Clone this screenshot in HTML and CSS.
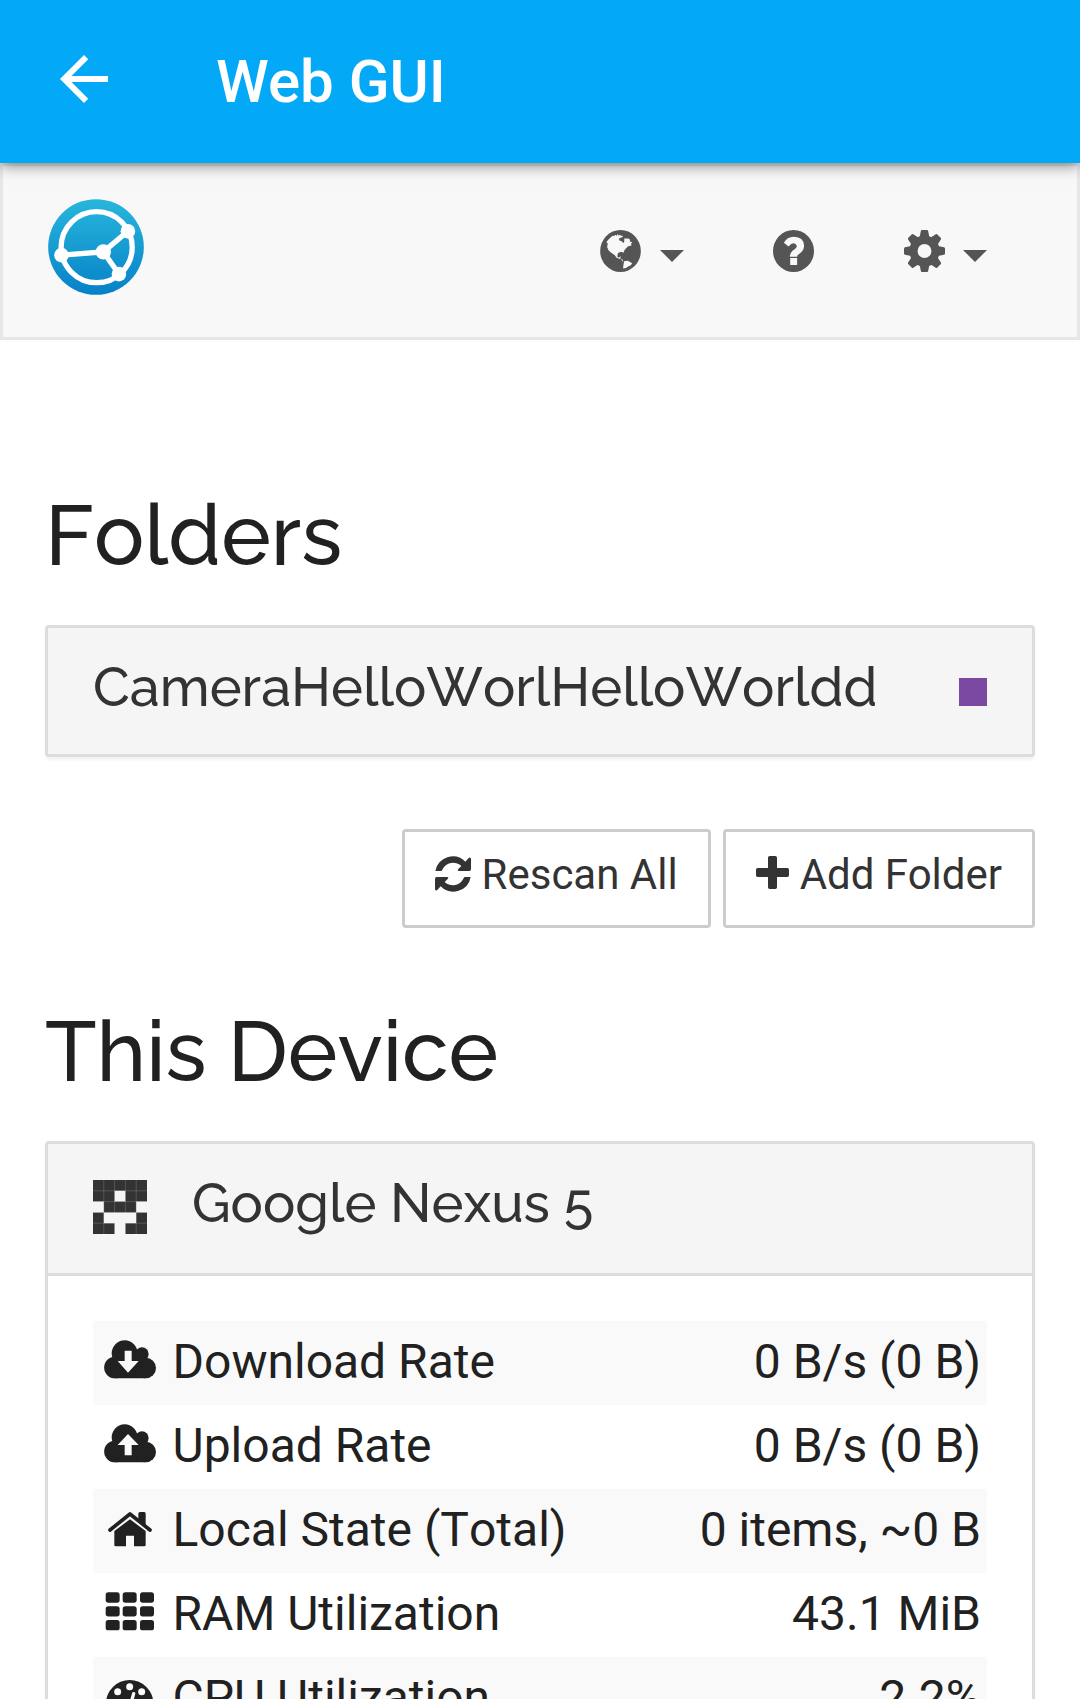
FILE: index.html
```html
<!DOCTYPE html>
<html lang="en">
<head>
<meta charset="utf-8">
<title>Web GUI</title>
<link rel="stylesheet" href="styles.css">
</head>
<body>
<header class="appbar">
  <svg class="back" viewBox="0 0 24 24"><path d="M20 11H7.83l5.59-5.59L12 4l-8 8 8 8 1.41-1.41L7.83 13H20z"/></svg>
  <span class="title">Web GUI</span>
</header>
<nav class="navbar">
  <svg class="logo" viewBox="24 26 288 289">
    <defs><linearGradient id="sky" x1="0" y1="0" x2="0" y2="1"><stop offset="0" stop-color="#27b7dc"/><stop offset="1" stop-color="#0781c8"/></linearGradient></defs>
    <circle cx="168" cy="170.5" r="144" fill="url(#sky)"/>
    <g fill="none" stroke="#fff" stroke-width="16"><circle cx="170" cy="171" r="107"/><path d="M64 195 190 185 264 123M190 185 237 252"/></g>
    <g fill="#fff"><circle cx="264" cy="123" r="22"/><circle cx="64" cy="195" r="22"/><circle cx="190" cy="185" r="23"/><circle cx="237" cy="252" r="22"/></g>
  </svg>
  <div class="menu">
    <a class="item language"><svg class="glyph" viewBox="173 240 121 124" preserveAspectRatio="none">
      <ellipse cx="233.500" cy="302" rx="60" ry="62"/>
      <path class="land" d="M192 276 196 270 204 262 210 257 215 258 218 254 222 257 225 252 228 257 232 253 234 257 240 257 240 261 230 264 229 270 237 273 240 277 244 278 245 264 252 266 255 264 262 269 261 274 268 276 264 281 267 285 255 289 246 298 242 307 236 304 226 308 224 318 229 322 234 317 233 325 240 327 240 335 236 326 230 325 222 322 216 314 206 307 198 300 194 290 196 280ZM244 332 255 331 268 338 264 344 256 348 250 352 241 354 242 345Z"/>
    </svg><i class="caret"></i></a>
    <a class="item"><svg class="glyph" viewBox="38 30 124 124" preserveAspectRatio="none">
      <circle cx="100" cy="92" r="62"/>
      <path class="land" d="M71 68Q80 50 101 50Q131 51 132 76Q132 92 118 100Q111 104 111 109H89Q89 98 97 91Q110 84 110 77Q108 70 100 69Q93 69 85 79ZM90 113H111V133H90Z"/>
    </svg></a>
    <a class="item"><svg class="glyph" viewBox="-62 -62 124 124" preserveAspectRatio="none">
      <circle r="33.500" fill="none" stroke="#555" stroke-width="25"/>
      <g id="teeth"><path id="tooth" d="M-15-40-11-59Q-10-62-8-62H8Q10-62 11-59L15-40Z"/><use href="#tooth" transform="rotate(45)"/><use href="#tooth" transform="rotate(90)"/><use href="#tooth" transform="rotate(135)"/></g>
      <use href="#teeth" transform="rotate(180)"/>
    </svg><i class="caret"></i></a>
  </div>
</nav>
<main class="content">
  <h3 class="heading folders">Folders</h3>
  <section class="panel folder">
    <span class="name">CameraHelloWorlHelloWorldd</span><i class="status"></i>
  </section>
  <div class="actions">
    <button class="btn"><svg class="sync" viewBox="167 138 108 108"><path id="turn" d="M168 183A53 53 0 0 1 258 155L268 144Q275 140 275 148V178Q275 183 270 183H240Q232 183 237 177L246 168A36 36 0 0 0 189 179Q188 183 185 183Z"/><use href="#turn" transform="rotate(180 221 192)"/></svg><span>Rescan All</span></button>
    <button class="btn"><svg class="plus" viewBox="0 0 99 99"><path d="M41 0H58Q63 0 63 5V36H94Q99 36 99 41V58Q99 63 94 63H63V94Q63 99 58 99H41Q36 99 36 94V63H5Q0 63 0 58V41Q0 36 5 36H36V5Q36 0 41 0Z"/></svg><span>Add Folder</span></button>
  </div>
  <h3 class="heading device">This Device</h3>
  <section class="panel info">
    <div class="panel-head">
      <svg class="identicon" viewBox="0 0 54 54"><path d="M0 0H54V21.600H32.400V10.800H21.600V21.600H0ZM10.800 21.600H43.200V32.400H10.800ZM0 32.400H10.800V43.200H21.600V54H0ZM43.200 32.400H54V54H32.400V43.200H43.200Z"/><path class="seams" d="M10.800 0V54M21.600 0V54M32.400 0V54M43.200 0V54M0 10.800H54M0 21.600H54M0 32.400H54M0 43.200H54"/></svg>
      <span class="name">Google Nexus 5</span>
    </div>
    <div class="rows">
      <div class="row"><svg class="icon" viewBox="51 47 165 150"><g id="cloud"><circle cx="90" cy="141.500" r="32.500"/><circle cx="119" cy="99" r="39"/><circle cx="171" cy="101" r="20"/><circle cx="182" cy="143" r="31"/><path d="M90 110H182V174H90ZM119 90H165V120H119Z"/></g><path class="arrow" d="M119 91H140V122H161L129 157 98 122H119Z"/></svg><span>Download Rate</span><span class="value">0 B/s (0 B)</span></div>
      <div class="row"><svg class="icon" viewBox="51 47 165 150"><use href="#cloud"/><path class="arrow" d="M119 153H140V122H161L129 89 98 122H119Z"/></svg><span>Upload Rate</span><span class="value">0 B/s (0 B)</span></div>
      <div class="row"><svg class="icon" viewBox="51 551 165 150"><path class="roof" d="M75 629 135 581 195 629"/><path d="M160 580Q160 575 165 575H178Q182 575 182 580V615L160 598ZM88 632 135 597 182 632V674Q182 678 178 678H147V646H123V678H92Q88 678 88 674Z"/></svg><span>Local State (Total)</span><span class="value">0 items, ~0 B</span></div>
      <div class="row"><svg class="icon" viewBox="51 803 165 150"><g id="cells"><rect x="62" y="816" width="42" height="31" rx="8"/><rect x="113" y="816" width="42" height="31" rx="8"/><rect x="165" y="816" width="42" height="31" rx="8"/></g><use href="#cells" y="41.500"/><use href="#cells" y="83"/></svg><span>RAM Utilization</span><span class="value">43.1 MiB</span></div>
      <div class="row"><svg class="icon" viewBox="51 1055 165 150"><circle cx="134" cy="1150" r="71"/><g class="arrow"><circle cx="134" cy="1099" r="10.500"/><circle cx="98" cy="1114" r="10.500"/><circle cx="170" cy="1114" r="10.500"/><circle cx="83" cy="1150" r="10.500"/><circle cx="185" cy="1150" r="10.500"/></g><path class="needle" d="M146 1120 134 1163"/></svg><span>CPU Utilization</span><span class="value">2.2%</span></div>
    </div>
  </section>
</main>
</body>
</html>
```
FILE: styles.css
```css
* { box-sizing: border-box; }
html { overflow: hidden; }
body { margin: 0; height: 1699px; overflow: hidden; background: #fff; color: #212121; font-family: Roboto, sans-serif; }
svg { display: block; flex: none; }

.appbar { position: relative; height: 163px; padding: 0 48px; display: flex; align-items: center; background: #03a9f7; color: #fff; box-shadow: 0 2px 14px rgba(0,0,0,.5); }
.back { width: 72px; height: 72px; margin: -5px 96px 0 0; fill: #fff; }
.title { font-size: 60px; font-weight: 500; line-height: 70px; }

.navbar { height: 177px; padding: 33px 90px 0 45px; display: flex; justify-content: space-between; border: 3px solid #e7e7e7; background: #f8f8f8; }
.logo { width: 96px; height: 96px; }
.menu { display: flex; gap: 90px; padding-top: 31px; }
.item { display: flex; gap: 18px; }
.language { gap: 19px; margin-right: -1px; }
.glyph { width: 41px; height: 42px; fill: #555; }
.land { fill: #f8f8f8; }
.caret { margin-top: 20px; height: 12px; border: 12px solid transparent; border-top-color: #555; border-bottom: 0; }

.content { padding: 0 45px; font-kerning: none; }
.heading { margin: 0; font-family: Raleway, Lato, sans-serif; font-weight: 500; font-size: 84px; line-height: 92px; color: #212121; white-space: nowrap; }
.folders { padding-top: 150px; height: 285px; }
.panel { border: 3px solid #ddd; border-radius: 4px; background: #fff; box-shadow: 0 3px 3px rgba(0,0,0,.05); }
.folder { height: 132px; padding: 0 45px; display: flex; justify-content: space-between; background: #f5f5f5; }
.name { margin-top: 29px; font-family: Raleway, Lato, sans-serif; font-weight: 500; font-size: 54px; line-height: 60px; color: #333; white-space: nowrap; }
.status { width: 28px; height: 28px; margin-top: 50px; background: #7b48a2; }

.actions { display: flex; justify-content: flex-end; gap: 12px; margin-top: 72px; }
.btn { height: 99px; padding: 0 30px; display: flex; border: 3px solid #ccc; border-radius: 4px; background: #fff; color: #333; font: 400 42px/50px Roboto, sans-serif; white-space: nowrap; }
.btn span { margin-top: 18px; }
.sync { width: 36px; height: 36px; margin: 24px 11px 0 0; fill: #333; }
.plus { width: 33px; height: 33px; margin: 24px 11px 0 0; fill: #333; }

.device { padding-top: 78px; height: 213px; }
.info { height: 700px; }
.panel-head { height: 132px; padding: 0 45px; display: flex; gap: 45px; border-bottom: 3px solid #ddd; background: #f5f5f5; }
.identicon { width: 54px; height: 54px; margin-top: 36px; fill: #333; }
.seams { stroke: #f5f5f5; stroke-opacity: .35; stroke-width: .5; }

.rows { padding: 45px; }
.row { height: 84px; padding: 13px 6px 0 9px; display: flex; font-size: 48px; line-height: 56px; white-space: nowrap; }
.row:nth-child(odd) { background: #f9f9f9; }
.icon { width: 55px; height: 50px; margin: 2px 15.5px 0 0; fill: #212121; }
.arrow { fill: #fafafa; }
.roof { fill: none; stroke: #212121; stroke-width: 11; stroke-linecap: round; stroke-linejoin: round; }
.needle { stroke: #fafafa; stroke-width: 10; stroke-linecap: round; }
.value { margin-left: auto; }
```
